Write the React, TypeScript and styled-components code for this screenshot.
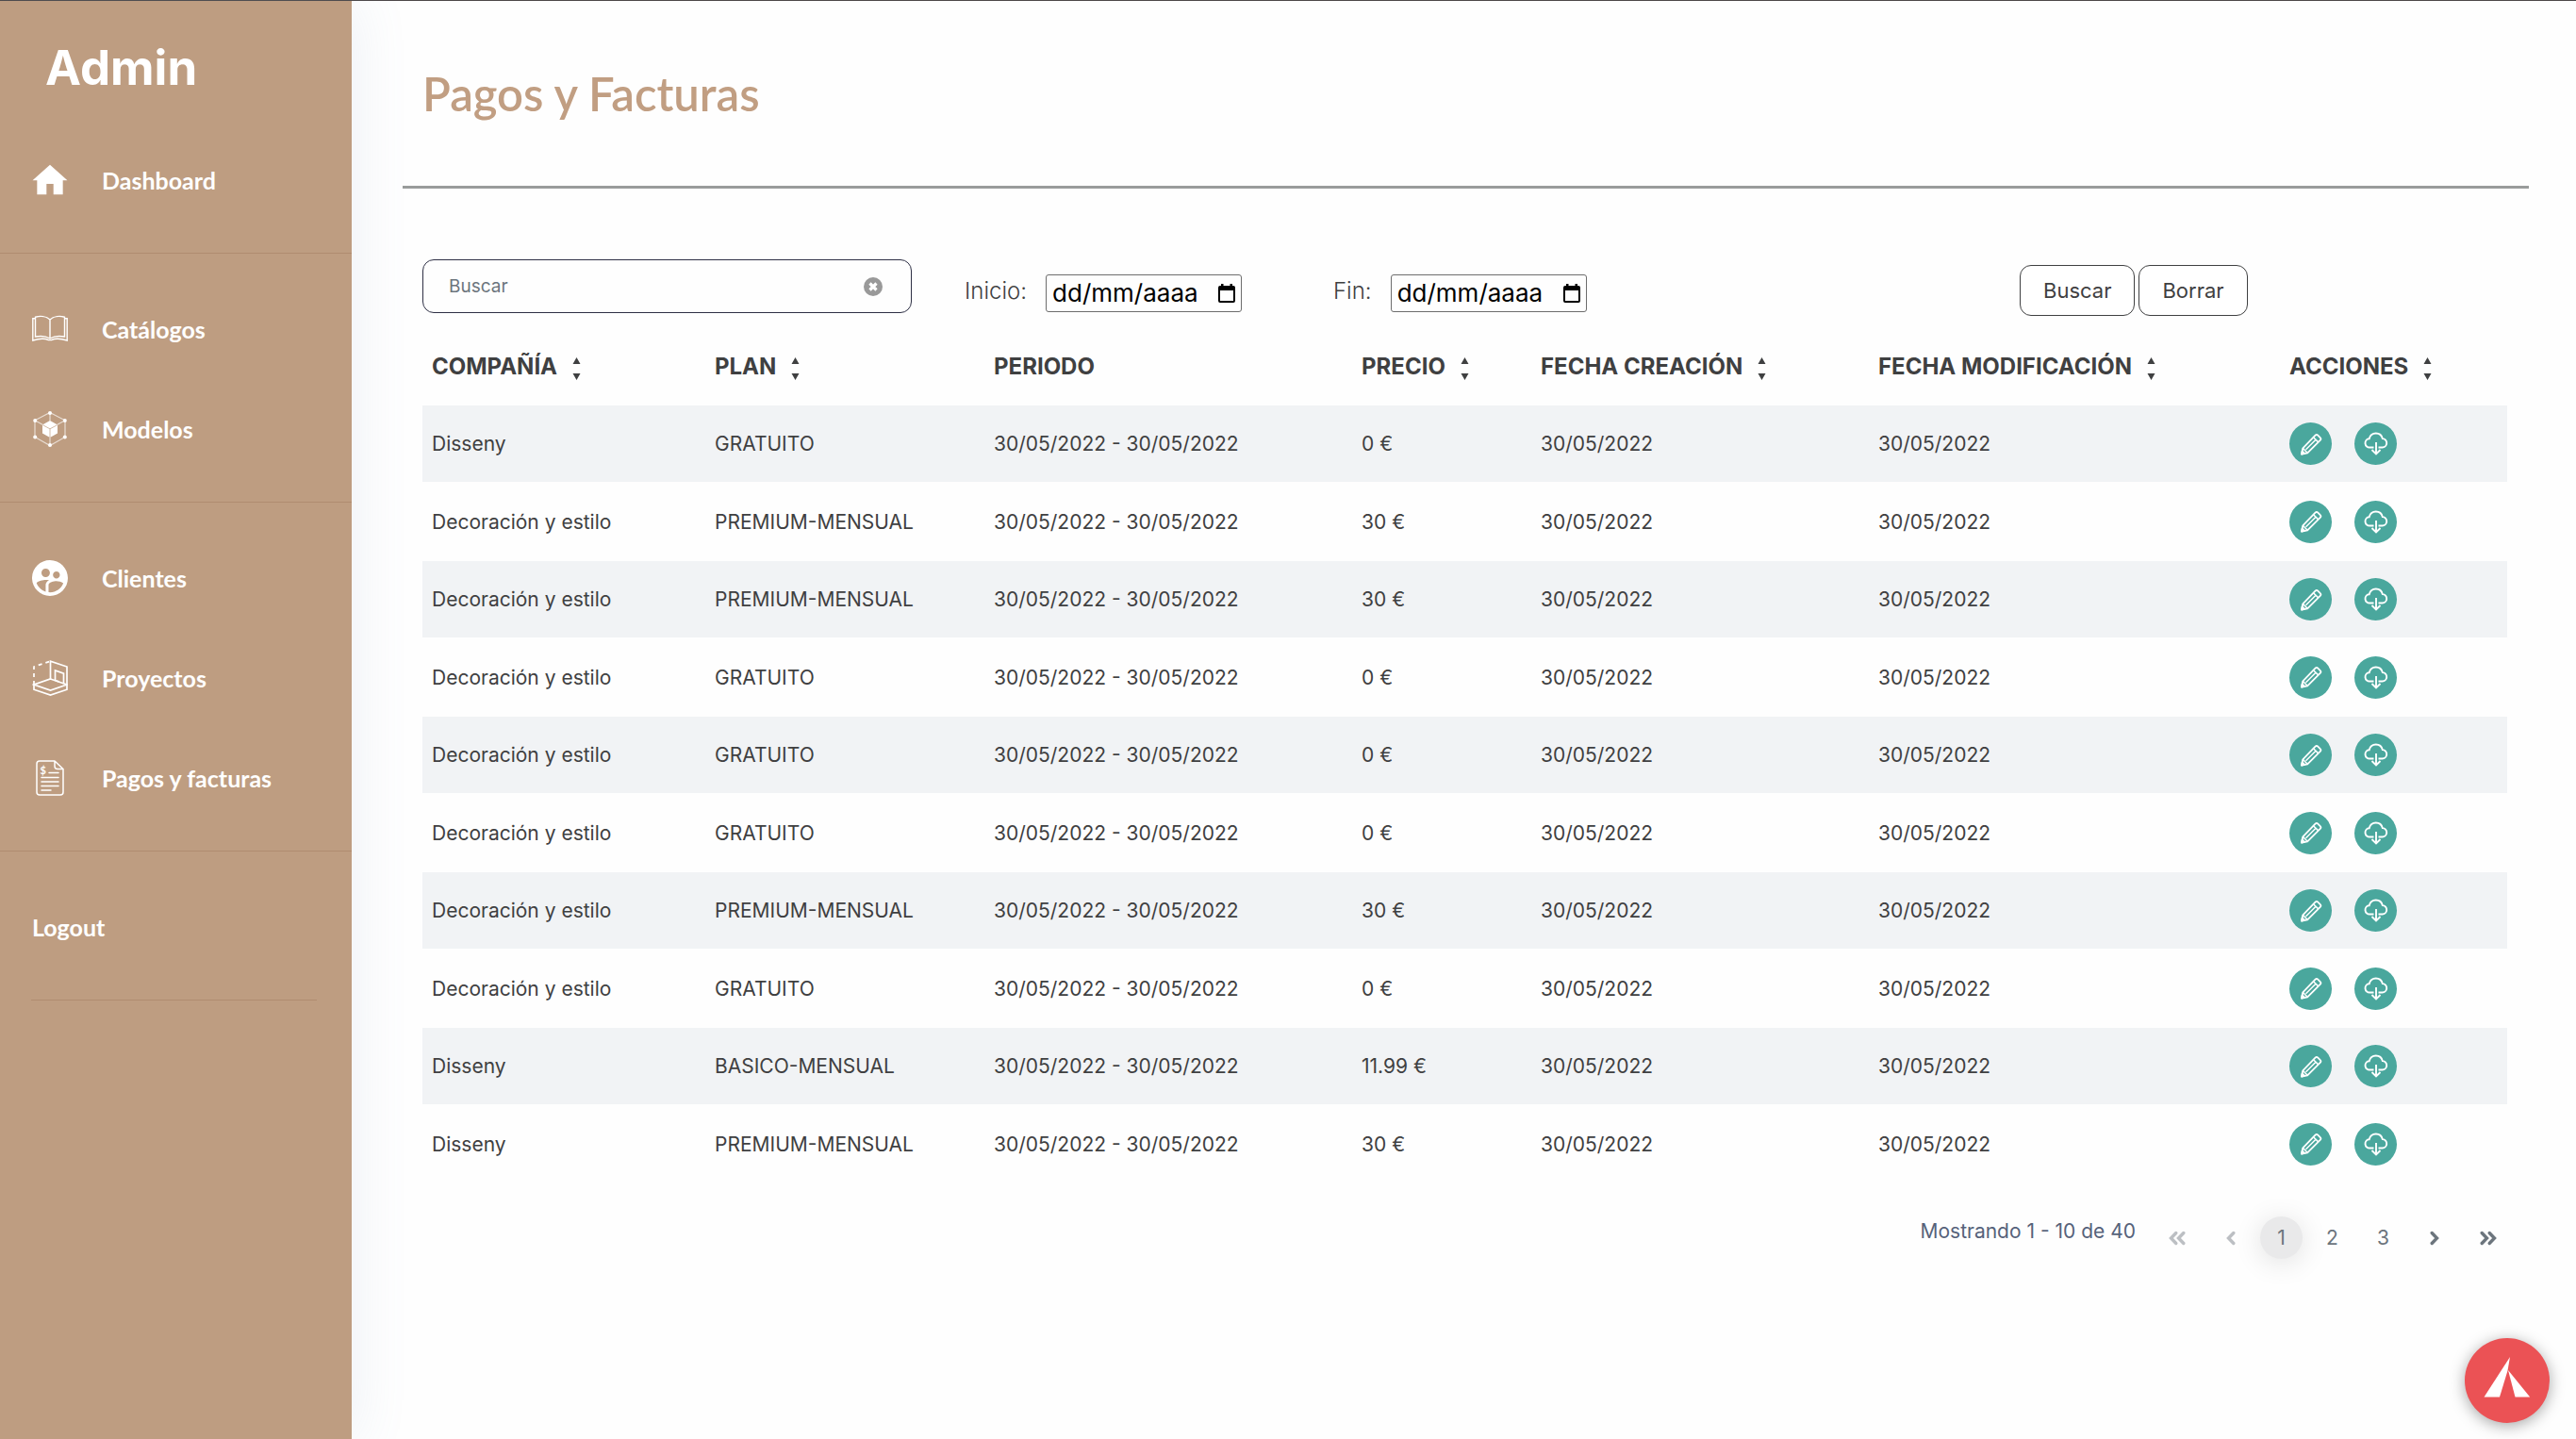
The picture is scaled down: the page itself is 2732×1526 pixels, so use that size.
import React, { useState } from 'react';
import styled, { createGlobalStyle } from 'styled-components';

const GlobalStyle = createGlobalStyle`
  *, *::before, *::after { box-sizing: border-box; }
  body {
    margin: 0;
    background: #fefefe;
    color: #3f4041;
    font-family: Inter, "Open Sans", sans-serif;
    font-size: 21px;
  }
  button, input { font-family: inherit; }
`;

const Page = styled.div`
  display: flex;
  min-height: 100vh;
  border-top: 1px solid #4d4849;
`;

/* ---------- Sidebar ---------- */

const Sidebar = styled.aside`
  flex: none;
  width: 373px;
  background: #be9d81;
  color: #fff;
  box-shadow: 0 0 56px rgba(120, 150, 190, 0.14);
`;

const Brand = styled.div`
  height: 137px;
  padding: 41px 0 0 48px;
  font-size: 51px;
  font-weight: 700;
  line-height: 60px;
`;

const NavGroup = styled.ul`
  margin: 0;
  padding: 0 0 24px;
  list-style: none;

  & + & {
    border-top: 1px solid #b08c70;
    padding-top: 27px;
  }
`;

const NavLink = styled.a`
  display: flex;
  align-items: center;
  gap: 36px;
  height: 106px;
  padding-left: 34px;
  color: #fff;
  font-family: Lato, "Open Sans", sans-serif;
  font-size: 25px;
  font-weight: 700;
  line-height: 32px;
  text-decoration: none;

  svg {
    flex: none;
    width: 38px;
    height: 38px;
  }
`;

const NavEnd = styled.hr`
  height: 1px;
  margin: 0 37px 0 33px;
  border: 0;
  background: #b08c70;
`;

/* ---------- Main area ---------- */

const Main = styled.main`
  flex: 1;
  min-width: 0;
  padding: 0 50px 0 54px;
`;

const Header = styled.header`
  padding: 68px 21px;
  border-bottom: 3px solid #999c9b;
`;

const Title = styled.h1`
  margin: 0;
  color: #c19e82;
  font-family: Lato, "Open Sans", sans-serif;
  font-size: 49px;
  font-weight: 600;
  line-height: 60px;
`;

const Content = styled.section`
  padding: 75px 23px 0 21px;
`;

const Filters = styled.form`
  display: grid;
  grid-template-columns: 519fr 335fr 672fr 517fr;
  column-gap: 56px;
  height: 60px;
  margin-bottom: 11px;
`;

const SearchBox = styled.div`
  display: flex;
  align-items: center;
  height: 57px;
  padding: 0 30px 0 27px;
  border: 1px solid #2e3045;
  border-radius: 12px;
`;

const SearchInput = styled.input`
  flex: 1;
  min-width: 0;
  padding: 0;
  border: 0;
  outline: 0;
  background: none;
  color: #3f4041;
  font-size: 19px;

  &::placeholder { color: #6c757d; opacity: 1; }
`;

const IconButton = styled.button`
  display: flex;
  padding: 0;
  border: 0;
  background: none;
  color: inherit;
  cursor: pointer;
`;

const SortButton = styled(IconButton)`
  padding-top: 6px;
`;

const DateField = styled.div`
  display: flex;
  align-items: flex-start;
  gap: 20px;
  padding-top: 16px;
`;

const DateLabel = styled.label`
  font-size: 24px;
  font-weight: 300;
  line-height: 36px;
`;

const DateBox = styled.div`
  display: flex;
  align-items: center;
  justify-content: space-between;
  width: 208px;
  height: 40px;
  padding: 0 6px;
  border: 1px solid #6d6d6d;
  border-radius: 3px;
  color: #000;
`;

const DateInput = styled.input`
  width: 164px;
  padding: 0;
  border: 0;
  outline: 0;
  background: none;
  color: #000;
  font-size: 26px;
  line-height: 36px;

  &::placeholder { color: #000; opacity: 1; }
`;

const FormActions = styled.div`
  display: flex;
  align-items: flex-end;
  gap: 4px;
`;

const OutlineButton = styled.button`
  height: 54px;
  padding: 0 24px;
  border: 1px solid #3f4041;
  border-radius: 12px;
  background: #fff;
  color: #3f4041;
  font-size: 22px;
  cursor: pointer;
`;

/* ---------- Table ---------- */

const Table = styled.table`
  width: 100%;
  table-layout: fixed;
  border-collapse: collapse;
  text-align: left;
`;

const HeadCell = styled.th`
  height: 84px;
  padding: 0 10px;
  font-size: 24px;
  font-weight: 700;
  white-space: nowrap;
`;

const HeadInner = styled.div`
  display: flex;
  align-items: center;
  gap: 16px;
`;

const Row = styled.tr`
  height: 84px;

  &:nth-child(odd) {
    height: 81px;
    background: #f1f3f5;
  }
`;

const Cell = styled.td`
  padding: 0 10px;
  white-space: nowrap;
`;

const RowActions = styled.div`
  display: flex;
  gap: 24px;
`;

const RoundButton = styled.button`
  display: flex;
  align-items: center;
  justify-content: center;
  width: 45px;
  height: 45px;
  padding: 0;
  border: 0;
  border-radius: 50%;
  background: #4aa79d;
  color: #fff;
  cursor: pointer;
`;

/* ---------- Pagination ---------- */

const Pagination = styled.nav`
  display: flex;
  justify-content: flex-end;
  gap: 9px;
  padding: 35px 18px 60px 0;
`;

const Summary = styled.span`
  margin-right: 9px;
  color: #56627a;
  line-height: 32px;
`;

const PageButton = styled.button<{ $wide?: boolean }>`
  display: flex;
  align-items: center;
  justify-content: center;
  width: ${(p) => (p.$wide ? 51 : 45)}px;
  height: 45px;
  padding: 0;
  border: 0;
  border-radius: 50%;
  background: none;
  color: #6c757d;
  font-size: 21px;
  cursor: pointer;

  &:disabled { color: #bcbfc3; }

  &[aria-current='page'] {
    background: #e9e9ea;
    box-shadow: 0 4px 30px rgba(0, 0, 0, 0.12);
  }
`;

const Fab = styled.button`
  position: fixed;
  right: 28px;
  bottom: 17px;
  width: 90px;
  height: 90px;
  padding: 0;
  border: 0;
  border-radius: 50%;
  background: #eb5255;
  box-shadow: 0 3px 16px rgba(0, 0, 0, 0.35);
  cursor: pointer;

  svg { display: block; }
`;

/* ---------- Icons ---------- */

const HomeIcon = () => (
  <svg viewBox="1.7 1.5 20.6 20.6" fill="currentColor" aria-hidden="true">
    <path d="M10 20v-6h4v6h5.4v-8H22L12 3 2 12h2.6v8z" />
  </svg>
);

const BookIcon = () => (
  <svg viewBox="0 0 38 38" fill="none" stroke="currentColor" strokeWidth="1.4" aria-hidden="true">
    <path d="M19 9C15 5 8 5 3.5 6.2V27C9 26 15 26.5 19 29c4-2.5 10-3 15.5-2V6.2C30 5 23 5 19 9v20" />
    <path d="M3.5 7.800H.8V31c7-2.200 13.500-2 16.700-.4h3C23.700 29 30.200 28.800 37.200 31V7.800h-2.700" />
  </svg>
);

const CubeIcon = () => (
  <svg viewBox="0 0 38 38" fill="currentColor" aria-hidden="true">
    <path d="M19 10l8 4.500v9L19 28l-8-4.500v-9z" />
    <path d="M11 14.500l8 4.300 8-4.300M19 18.800V28" fill="none" stroke="#be9d81" strokeWidth="0.700" />
    <path
      d="M19 1.500l16 8.300v17.600L19 36.500 3 27.400V9.800zM3 9.800l8.500 4.700M35 9.800l-8.500 4.700M19 28v8.500M19 1.500V10"
      fill="none"
      stroke="currentColor"
      strokeWidth="1.200"
      opacity="0.65"
    />
    <circle cx="19" cy="2" r="2" />
    <circle cx="3.200" cy="10" r="2" />
    <circle cx="34.800" cy="10" r="2" />
    <circle cx="3.200" cy="27.400" r="2" />
    <circle cx="34.800" cy="27.400" r="2" />
    <circle cx="19" cy="36" r="2" />
  </svg>
);

const ClientsIcon = () => (
  <svg viewBox="2 2 20 20" fill="currentColor" aria-hidden="true">
    <path d="M11.990 2c-5.520 0-10 4.480-10 10s4.480 10 10 10 10-4.480 10-10-4.480-10-10-10zm3.610 6.340c1.070 0 1.930.86 1.930 1.930 0 1.070-.86 1.930-1.930 1.930-1.070 0-1.930-.86-1.930-1.930-.01-1.070.86-1.930 1.930-1.930zm-6-1.580c1.300 0 2.360 1.060 2.360 2.360 0 1.300-1.060 2.360-2.360 2.360s-2.360-1.060-2.360-2.360c0-1.310 1.050-2.360 2.360-2.360zm0 9.130v3.750c-2.400-.75-4.300-2.600-5.140-4.960 1.050-1.120 3.670-1.690 5.140-1.690.53 0 1.200.08 1.900.22-1.640.87-1.900 2.020-1.900 2.680zM11.990 20c-.27 0-.53-.01-.79-.04v-4.070c0-1.420 2.940-2.130 4.400-2.130 1.070 0 2.920.39 3.840 1.150-1.170 2.970-4.060 5.090-7.450 5.090z" />
  </svg>
);

const ProjectIcon = () => (
  <svg viewBox="0 0 38 38" fill="none" stroke="currentColor" strokeWidth="1.700" aria-hidden="true">
    <path d="M19.500 20V1.200L37 7v24.200L19.500 37 2 31.200V26" />
    <path d="M19.500 20L37 26l-17.500 6L2 26z" />
    <path d="M24.500 21.500V11l9 3.200v10.300M24.500 21.500l4 1.400" />
    <path d="M2 26V7l17.500-5.800" strokeDasharray="4 4" />
  </svg>
);

const InvoiceIcon = () => (
  <svg viewBox="0 0 38 38" fill="none" stroke="currentColor" strokeWidth="1.500" strokeLinecap="round" aria-hidden="true">
    <path d="M24 1H8a3 3 0 0 0-3 3v30a3 3 0 0 0 3 3h22a3 3 0 0 0 3-3V9.500zM24 1v5.500a3 3 0 0 0 3 3h6" />
    <path d="M18 13.500h10M10 18.500h18M10 23h18M10 27.500h18M10 32h10" />
    <text x="8.500" y="14.500" fontSize="11" fontWeight="700" fill="currentColor" stroke="none">$</text>
  </svg>
);

const ClearIcon = () => (
  <svg width="20" height="20" viewBox="0 0 20 20" aria-hidden="true">
    <circle cx="10" cy="10" r="10" fill="#999" />
    <path d="M6.500 6.500l7 7M13.500 6.500l-7 7" stroke="#fff" strokeWidth="3.200" />
  </svg>
);

const CalendarIcon = () => (
  <svg width="18" height="20" viewBox="0 0 18 20" aria-hidden="true">
    <path d="M3 0h2.500v2h7V0H15v2h1a2 2 0 0 1 2 2v14a2 2 0 0 1-2 2H2a2 2 0 0 1-2-2V4a2 2 0 0 1 2-2h1zM2 7v11h14V7z" fillRule="evenodd" />
  </svg>
);

const SortIcon = () => (
  <svg width="9" height="24" viewBox="0 0 9 24" fill="currentColor" aria-hidden="true">
    <path d="M4.500 0L8.500 7h-8zM4.500 24l4-7h-8z" />
  </svg>
);

const PencilIcon = () => (
  <svg width="24" height="24" viewBox="0 0 24 24" fill="none" stroke="currentColor" strokeWidth="1.800" strokeLinejoin="round" aria-hidden="true">
    <path d="M2 22.500l1.300-6.200L16.500 2.700a2 2 0 0 1 2.800 0l2.400 2.400a2 2 0 0 1 0 2.800L8.200 21.300z" />
    <path d="M14.500 4.700l5.200 5.200M3.300 16.300l4.900 5M6.500 17.800L17 7.300" strokeWidth="1.500" />
    <path d="M2 22.500l.6-3 2.400 2.400z" fill="currentColor" />
  </svg>
);

const CloudIcon = () => (
  <svg width="26" height="25" viewBox="0 0 26 25" fill="none" stroke="currentColor" strokeWidth="1.900" aria-hidden="true">
    <path d="M10.500 16.500H6.500a4.600 4.600 0 0 1-.8-9.200C6.500 4 9.200 1.500 12.800 1.500s6.200 2.300 7 5.600a4.700 4.700 0 0 1-.6 9.400h-3.700" />
    <path d="M13 11v12.500M8.500 19l4.500 4.500 4.500-4.500" />
  </svg>
);

const Chevron = ({ back, double }: { back?: boolean; double?: boolean }) => (
  <svg
    width={double ? 18 : 10}
    height="16"
    viewBox={double ? '0 0 18 16' : '0 0 10 16'}
    fill="none"
    stroke="currentColor"
    strokeWidth="3.400"
    strokeLinecap="round"
    aria-hidden="true"
  >
    <path d={back ? 'M7.800 2.500L2.500 8l5.300 5.500' : 'M2.200 2.500L7.500 8l-5.300 5.500'} />
    {double && <path d={back ? 'M15.800 2.500L10.500 8l5.300 5.500' : 'M10.200 2.500L15.500 8l-5.300 5.500'} />}
  </svg>
);

const TentIcon = () => (
  <svg width="90" height="90" viewBox="0 0 90 90" fill="#fff" aria-hidden="true">
    <path d="M48 20L20.500 62.500H37L45.500 34.500z" />
    <path d="M46 34l23.200 28.500H53.500z" />
  </svg>
);

/* ---------- Data ---------- */

const navGroups = [
  [{ label: 'Dashboard', icon: <HomeIcon /> }],
  [
    { label: 'Catálogos', icon: <BookIcon /> },
    { label: 'Modelos', icon: <CubeIcon /> },
  ],
  [
    { label: 'Clientes', icon: <ClientsIcon /> },
    { label: 'Proyectos', icon: <ProjectIcon /> },
    { label: 'Pagos y facturas', icon: <InvoiceIcon /> },
  ],
  [{ label: 'Logout', icon: null }],
];

const columns = [
  { title: 'COMPAÑÍA', width: 300, sortable: true },
  { title: 'PLAN', width: 296, sortable: true },
  { title: 'PERIODO', width: 390, sortable: false },
  { title: 'PRECIO', width: 190, sortable: true },
  { title: 'FECHA CREACIÓN', width: 358, sortable: true },
  { title: 'FECHA MODIFICACIÓN', width: 436, sortable: true },
  { title: 'ACCIONES', width: 241, sortable: true },
];

const day = '30/05/2022';

const payments = [
  ['Disseny', 'GRATUITO', '0 €'],
  ['Decoración y estilo', 'PREMIUM-MENSUAL', '30 €'],
  ['Decoración y estilo', 'PREMIUM-MENSUAL', '30 €'],
  ['Decoración y estilo', 'GRATUITO', '0 €'],
  ['Decoración y estilo', 'GRATUITO', '0 €'],
  ['Decoración y estilo', 'GRATUITO', '0 €'],
  ['Decoración y estilo', 'PREMIUM-MENSUAL', '30 €'],
  ['Decoración y estilo', 'GRATUITO', '0 €'],
  ['Disseny', 'BASICO-MENSUAL', '11.99 €'],
  ['Disseny', 'PREMIUM-MENSUAL', '30 €'],
];

const DateFilter = ({ id, label }: { id: string; label: string }) => (
  <DateField>
    <DateLabel htmlFor={id}>{label}</DateLabel>
    <DateBox>
      <DateInput id={id} type="text" placeholder="dd/mm/aaaa" />
      <IconButton type="button" aria-label="Abrir calendario">
        <CalendarIcon />
      </IconButton>
    </DateBox>
  </DateField>
);

export default function App() {
  const [query, setQuery] = useState('');
  const [page, setPage] = useState(1);

  return (
    <>
      <GlobalStyle />
      <Page>
        <Sidebar>
          <Brand>Admin</Brand>
          <nav>
            {navGroups.map((group) => (
              <NavGroup key={group[0].label}>
                {group.map((item) => (
                  <li key={item.label}>
                    <NavLink href="#">
                      {item.icon}
                      {item.label}
                    </NavLink>
                  </li>
                ))}
              </NavGroup>
            ))}
            <NavEnd />
          </nav>
        </Sidebar>

        <Main>
          <Header>
            <Title>Pagos y Facturas</Title>
          </Header>

          <Content>
            <Filters onSubmit={(e) => e.preventDefault()}>
              <SearchBox>
                <SearchInput
                  type="text"
                  aria-label="Buscar"
                  placeholder="Buscar"
                  value={query}
                  onChange={(e) => setQuery(e.target.value)}
                />
                <IconButton type="button" aria-label="Limpiar" onClick={() => setQuery('')}>
                  <ClearIcon />
                </IconButton>
              </SearchBox>
              <DateFilter id="inicio" label="Inicio:" />
              <DateFilter id="fin" label="Fin:" />
              <FormActions>
                <OutlineButton type="submit">Buscar</OutlineButton>
                <OutlineButton type="reset" onClick={() => setQuery('')}>Borrar</OutlineButton>
              </FormActions>
            </Filters>

            <Table>
              <colgroup>
                {columns.map((c) => (
                  <col key={c.title} width={c.width} />
                ))}
              </colgroup>
              <thead>
                <tr>
                  {columns.map((c) => (
                    <HeadCell key={c.title} scope="col">
                      <HeadInner>
                        {c.title}
                        {c.sortable && (
                          <SortButton type="button" aria-label={`Ordenar por ${c.title}`}>
                            <SortIcon />
                          </SortButton>
                        )}
                      </HeadInner>
                    </HeadCell>
                  ))}
                </tr>
              </thead>
              <tbody>
                {payments.map(([company, plan, price], i) => (
                  <Row key={i}>
                    <Cell>{company}</Cell>
                    <Cell>{plan}</Cell>
                    <Cell>{`${day} - ${day}`}</Cell>
                    <Cell>{price}</Cell>
                    <Cell>{day}</Cell>
                    <Cell>{day}</Cell>
                    <Cell>
                      <RowActions>
                        <RoundButton type="button" aria-label="Editar">
                          <PencilIcon />
                        </RoundButton>
                        <RoundButton type="button" aria-label="Descargar">
                          <CloudIcon />
                        </RoundButton>
                      </RowActions>
                    </Cell>
                  </Row>
                ))}
              </tbody>
            </Table>
          </Content>

          <Pagination aria-label="Paginación">
            <Summary>Mostrando 1 - 10 de 40</Summary>
            <PageButton $wide disabled={page === 1} aria-label="Primera" onClick={() => setPage(1)}>
              <Chevron back double />
            </PageButton>
            <PageButton disabled={page === 1} aria-label="Anterior" onClick={() => setPage(page - 1)}>
              <Chevron back />
            </PageButton>
            {[1, 2, 3].map((n) => (
              <PageButton key={n} aria-current={n === page ? 'page' : undefined} onClick={() => setPage(n)}>
                {n}
              </PageButton>
            ))}
            <PageButton aria-label="Siguiente" onClick={() => setPage(Math.min(page + 1, 3))}>
              <Chevron />
            </PageButton>
            <PageButton $wide aria-label="Última" onClick={() => setPage(3)}>
              <Chevron double />
            </PageButton>
          </Pagination>
        </Main>
      </Page>
      <Fab type="button" aria-label="Ayuda">
        <TentIcon />
      </Fab>
    </>
  );
}
